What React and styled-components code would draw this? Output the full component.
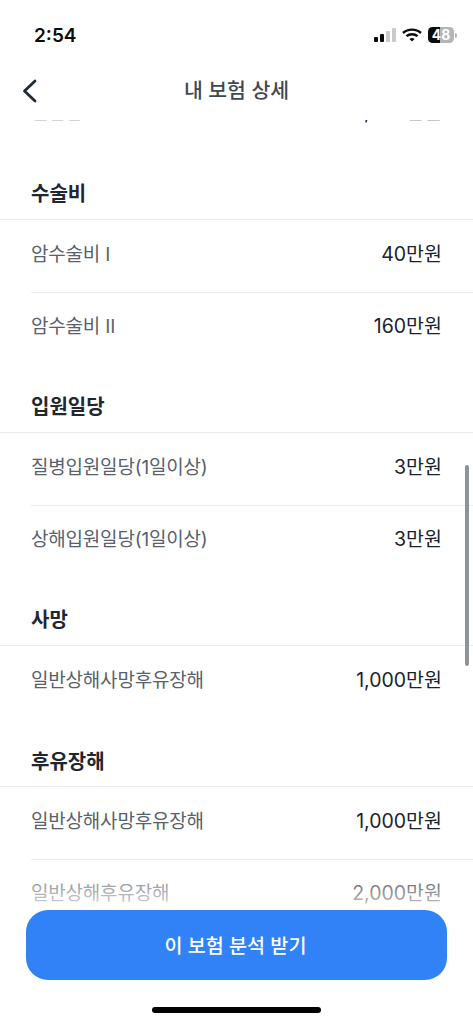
import styled, { createGlobalStyle } from "styled-components";

const GlobalStyle = createGlobalStyle`
  html, body {
    margin: 0;
    padding: 0;
    background: #fff;
    font-family: "Inter", "Noto Sans CJK KR", sans-serif;
  }
`;

const Screen = styled.div`
  position: relative;
  width: 473px;
  height: 1024px;
  overflow: hidden;
  display: flex;
  flex-direction: column;
  background: #fff;
`;

const StatusBar = styled.div`
  height: 60px;
  flex: none;
  display: flex;
  align-items: center;
  justify-content: space-between;
  padding: 10px 16px 0 34px;
  box-sizing: border-box;
`;

const Time = styled.span`
  font-size: 19px;
  font-weight: 600;
  color: #0b0d10;
`;

const StatusIcons = styled.div`
  display: flex;
  align-items: center;
  gap: 6px;
`;

const BatteryBody = styled.div`
  position: relative;
  display: flex;
  align-items: center;
`;

const BatteryFill = styled.div`
  width: 26px;
  height: 16px;
  border-radius: 4.5px;
  background: linear-gradient(90deg, #0b0b0b 48%, #b4b5b8 48%);
  color: #fff;
  font-size: 14px;
  font-weight: 700;
  line-height: 16px;
  text-align: center;
`;

const BatteryTip = styled.div`
  width: 2px;
  height: 5px;
  margin-left: 1px;
  border-radius: 0 2px 2px 0;
  background: #b4b5b8;
`;

const NavBar = styled.header`
  height: 60px;
  box-sizing: border-box;
  padding-bottom: 2px;
  flex: none;
  display: flex;
  align-items: center;
  justify-content: center;
  position: relative;
`;

const BackButton = styled.button`
  position: absolute;
  left: 18px;
  top: 15px;
  width: 24px;
  height: 32px;
  padding: 0;
  border: 0;
  background: none;
  color: #1f2a37;
`;

const NavTitle = styled.h1`
  margin: 0;
  font-size: 20.5px;
  font-weight: 500;
  color: #3f4852;
`;

const Scroller = styled.main`
  flex: 1;
  overflow: hidden;
  position: relative;
`;

const Content = styled.div`
  margin-top: -41.5px;
`;

const SectionTitle = styled.h2`
  margin: 0;
  height: 69.7px;
  box-sizing: border-box;
  padding: 29px 31px 0;
  border-bottom: 1px solid #e9eaec;
  font-size: 20px;
  line-height: 30px;
  font-weight: 700;
  color: #1e2732;
`;

const Row = styled.div`
  height: 71.7px;
  box-sizing: border-box;
  margin-left: 31px;
  padding: 0 31px 7px 0;
  display: flex;
  align-items: center;
  justify-content: space-between;
  font-size: 19px;
  border-top: ${(p) => (p.$divided ? "1px solid #e9eaec" : "0")};
`;

const Label = styled.span`
  color: #58616c;
  letter-spacing: -0.2px;
`;

const Amount = styled.span`
  color: #1a222c;
  font-size: 19.5px;
`;

const ScrollThumb = styled.div`
  position: absolute;
  right: 4px;
  top: 465px;
  width: 4px;
  height: 201px;
  border-radius: 2px;
  background: #8d9399;
`;

const BottomFade = styled.div`
  position: absolute;
  left: 0;
  right: 0;
  top: 860px;
  height: 60px;
  background: linear-gradient(180deg, rgba(255, 255, 255, 0), rgba(255, 255, 255, 0.95));
`;

const BottomArea = styled.div`
  position: absolute;
  left: 0;
  right: 0;
  top: 910px;
  bottom: 0;
  background: #fff;
  display: flex;
  flex-direction: column;
  align-items: center;
`;

const CtaButton = styled.button`
  width: 421px;
  height: 70px;
  border: 0;
  border-radius: 22px;
  background: #3182f6;
  color: #fff;
  font-family: inherit;
  font-size: 19.6px;
  font-weight: 500;
  padding: 0 2px 2px 0;
`;

const HomeIndicator = styled.div`
  width: 169px;
  height: 6px;
  margin-top: 27px;
  border-radius: 3px;
  background: #000;
`;

const sections = [
  { rows: [["일반암 I", "1,000만원"]] },
  { title: "수술비", rows: [["암수술비 I", "40만원"], ["암수술비 II", "160만원"]] },
  { title: "입원일당", rows: [["질병입원일당(1일이상)", "3만원"], ["상해입원일당(1일이상)", "3만원"]] },
  { title: "사망", rows: [["일반상해사망후유장해", "1,000만원"]] },
  { title: "후유장해", rows: [["일반상해사망후유장해", "1,000만원"], ["일반상해후유장해", "2,000만원"]] },
];

function SignalIcon() {
  return (
    <svg width="22" height="14" viewBox="0 0 22 14">
      <rect x="0" y="9" width="4" height="5" rx="1" fill="#0b0b0b" />
      <rect x="6" y="6" width="4" height="8" rx="1" fill="#0b0b0b" />
      <rect x="12" y="3" width="4" height="11" rx="1" fill="#c9cacc" />
      <rect x="18" y="0" width="4" height="14" rx="1" fill="#c9cacc" />
    </svg>
  );
}

function WifiIcon() {
  return (
    <svg width="20" height="14" viewBox="0 0 20 14" fill="none" stroke="#0b0b0b" strokeWidth="2.4">
      <path d="M1 5 C6 0.5 14 0.5 19 5" />
      <path d="M4.5 8.2 C7.5 5.6 12.5 5.6 15.5 8.2" />
      <path d="M10 13.5 L7.4 10.9 C9 9.8 11 9.8 12.6 10.9 Z" fill="#0b0b0b" stroke="none" />
    </svg>
  );
}

function App() {
  return (
    <Screen>
      <GlobalStyle />
      <StatusBar>
        <Time>2:54</Time>
        <StatusIcons>
          <SignalIcon />
          <WifiIcon />
          <BatteryBody>
            <BatteryFill>48</BatteryFill>
            <BatteryTip />
          </BatteryBody>
        </StatusIcons>
      </StatusBar>
      <NavBar>
        <BackButton aria-label="뒤로">
          <svg width="24" height="32" viewBox="0 0 24 32" fill="none" stroke="currentColor" strokeWidth="2.8" strokeLinecap="round" strokeLinejoin="round">
            <path d="M17 6 L6.500 16 L17 26" />
          </svg>
        </BackButton>
        <NavTitle>내 보험 상세</NavTitle>
      </NavBar>
      <Scroller>
        <Content>
          {sections.map((section, i) => (
            <section key={i}>
              {section.title && <SectionTitle>{section.title}</SectionTitle>}
              {section.rows.map(([label, amount], j) => (
                <Row key={label} $divided={j > 0}>
                  <Label>{label}</Label>
                  <Amount>{amount}</Amount>
                </Row>
              ))}
            </section>
          ))}
        </Content>
      </Scroller>
      <ScrollThumb />
      <BottomFade />
      <BottomArea>
        <CtaButton>이 보험 분석 받기</CtaButton>
        <HomeIndicator />
      </BottomArea>
    </Screen>
  );
}

export default App;
